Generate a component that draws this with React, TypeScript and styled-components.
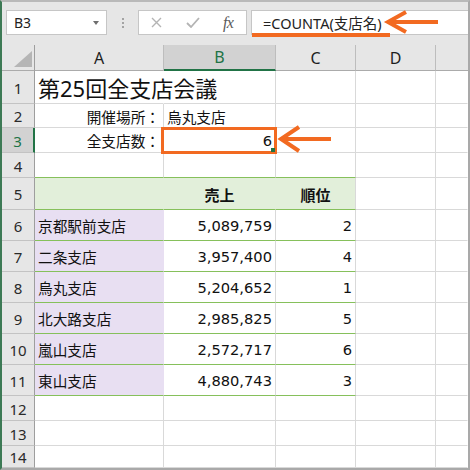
import React from 'react';
import styled, { createGlobalStyle } from 'styled-components';

const CELL_FONT = `"DejaVu Sans", "Noto Sans CJK JP", sans-serif`;
const UI_FONT = `"Noto Sans", "Noto Sans CJK JP", sans-serif`;
const ORANGE = '#f26a21';
const XL_GREEN = '#217346';
const TABLE_GREEN = '#86c05b';
const HEAD_FILL = '#e2efda';
const NAME_FILL = '#e8dff2';
const GRID = '#d9d9d9';

const GlobalStyle = createGlobalStyle`
  html, body {
    margin: 0;
    padding: 0;
    background: #ffffff;
  }
  * {
    box-sizing: border-box;
  }
`;

const Frame = styled.div`
  position: relative;
  width: 470px;
  height: 470px;
  overflow: hidden;
  background: #ffffff;
  border-top: 2px solid #b9b9b9;
  border-left: 2px solid #3d7a55;
  border-right: 2px solid #a9a9a9;
  border-bottom: 2px solid #a9a9a9;
  display: flex;
  flex-direction: column;
`;

/* ---------- formula bar ---------- */

const FormulaBar = styled.div`
  flex: none;
  height: 43px;
  background: #e6e6e6;
  display: flex;
  align-items: flex-start;
  padding: 8px 0 0 4px;
`;

const NameBox = styled.div`
  width: 101px;
  height: 25px;
  background: #ffffff;
  border: 1px solid #c6c6c6;
  display: flex;
  align-items: center;
  justify-content: space-between;
  padding: 0 7px 0 7px;
  font-family: ${UI_FONT};
  font-size: 14px;
  color: #222222;
`;

const DropArrow = styled.span`
  width: 0;
  height: 0;
  border-left: 3.5px solid transparent;
  border-right: 3.5px solid transparent;
  border-top: 4px solid #6e6e6e;
`;

const Grip = styled.div`
  width: 31px;
  height: 25px;
  display: flex;
  flex-direction: column;
  align-items: center;
  justify-content: center;
  gap: 2px;

  span {
    width: 2px;
    height: 2px;
    background: #a3a3a3;
  }
`;

const FxBox = styled.div`
  width: 109px;
  height: 25px;
  background: #ffffff;
  border: 1px solid #c6c6c6;
  display: flex;
`;

const FxSlot = styled.div`
  flex: 1;
  display: flex;
  align-items: center;
  justify-content: center;
`;

const FxLabel = styled.span`
  font-family: "Liberation Serif", serif;
  font-style: italic;
  font-size: 16px;
  color: #5a5a5a;
  letter-spacing: -0.5px;
`;

const FormulaInput = styled.div`
  flex: 1;
  height: 25px;
  margin-left: 4px;
  background: #ffffff;
  border: 1px solid #c6c6c6;
  border-right: none;
  display: flex;
  align-items: center;
  padding-left: 11px;
  font-family: ${UI_FONT};
  font-size: 14.5px;
  color: #222222;
  white-space: nowrap;
`;

/* ---------- sheet ---------- */

const Sheet = styled.div`
  flex: 1;
  display: grid;
  grid-template-columns: 33px 129px 112px 80px 80px 1fr;
  grid-template-rows: 26px 33px 24px 25px 25px 32px repeat(6, 31px) 25px 25px 1fr;
  font-family: ${CELL_FONT};
  color: #111111;
`;

const Corner = styled.div`
  background: #e6e6e6;
  border-right: 1px solid #9e9e9e;
  border-bottom: 1px solid #ababab;
  display: flex;
  align-items: flex-end;
  justify-content: flex-end;
  padding: 0 2px 3px 0;
`;

const ColHead = styled.div<{ $selected?: boolean; $last?: boolean }>`
  background: ${(p) => (p.$selected ? '#d2d2d2' : '#e6e6e6')};
  border-right: ${(p) => (p.$last ? 'none' : '1px solid #bdbdbd')};
  border-bottom: ${(p) => (p.$selected ? `2px solid ${XL_GREEN}` : '1px solid #ababab')};
  display: flex;
  align-items: center;
  justify-content: center;
  font-family: ${UI_FONT};
  font-size: 16px;
  color: ${(p) => (p.$selected ? XL_GREEN : '#1e1e1e')};
`;

const RowHead = styled.div<{ $selected?: boolean }>`
  background: ${(p) => (p.$selected ? '#d2d2d2' : '#e6e6e6')};
  border-right: ${(p) => (p.$selected ? `2px solid ${XL_GREEN}` : '1px solid #9e9e9e')};
  border-bottom: 1px solid #c3c3c3;
  display: flex;
  align-items: center;
  justify-content: center;
  padding-top: 1px;
  font-family: ${UI_FONT};
  font-size: 15px;
  color: ${(p) => (p.$selected ? XL_GREEN : '#2a2a2a')};
`;

type Align = 'left' | 'right' | 'center';

const justify: Record<Align, string> = {
  left: 'flex-start',
  right: 'flex-end',
  center: 'center',
};

const Cell = styled.div<{
  $align?: Align;
  $fill?: string;
  $line?: string;
  $rightLine?: string;
  $bold?: boolean;
  $size?: number;
  $font?: string;
}>`
  position: relative;
  min-width: 0;
  display: flex;
  align-items: center;
  justify-content: ${(p) => justify[p.$align || 'left']};
  padding: 1px 3px 0 3px;
  background: ${(p) => p.$fill || '#ffffff'};
  border-right: 1px solid ${(p) => p.$rightLine || GRID};
  border-bottom: 1px solid ${(p) => p.$line || GRID};
  font-family: ${(p) => p.$font || CELL_FONT};
  font-size: ${(p) => p.$size || 14.67}px;
  font-weight: ${(p) => (p.$bold ? 700 : 400)};
  white-space: nowrap;
`;

const Title = styled.span`
  position: relative;
  z-index: 1;
  margin-top: -2px;
`;

const Selection = styled.div`
  position: absolute;
  top: -1px;
  left: -3px;
  right: -2px;
  bottom: -2px;
  border: 3px solid ${ORANGE};
  z-index: 3;
`;

const FillHandle = styled.span`
  position: absolute;
  right: 0;
  bottom: 0;
  width: 4px;
  height: 4px;
  background: ${XL_GREEN};
  z-index: 4;
`;

/* ---------- annotations ---------- */

const Underline = styled.div`
  position: absolute;
  left: 250px;
  top: 31px;
  width: 138px;
  height: 4px;
  background: ${ORANGE};
`;

const Arrow = styled.svg<{ $x: number; $y: number }>`
  position: absolute;
  left: ${(p) => p.$x}px;
  top: ${(p) => p.$y}px;
  overflow: visible;
  z-index: 5;
`;

const LeftArrow: React.FC<{ x: number; y: number; len: number; head: number; half: number }> = ({
  x,
  y,
  len,
  head,
  half,
}) => (
  <Arrow $x={x} $y={y} width={len + 4} height={half * 2 + 4} viewBox={`0 0 ${len + 4} ${half * 2 + 4}`}>
    <g fill="none" stroke={ORANGE} strokeWidth={4} strokeLinejoin="miter" strokeMiterlimit={6}>
      <line x1={4} y1={half + 2} x2={len + 4} y2={half + 2} />
      <polyline points={`${4 + head},2 4,${half + 2} ${4 + head},${half * 2 + 2}`} />
    </g>
  </Arrow>
);

const branches: [string, string, string][] = [
  ['京都駅前支店', '5,089,759', '2'],
  ['二条支店', '3,957,400', '4'],
  ['烏丸支店', '5,204,652', '1'],
  ['北大路支店', '2,985,825', '5'],
  ['嵐山支店', '2,572,717', '6'],
  ['東山支店', '4,880,743', '3'],
];

const Spare: React.FC<{ line?: string }> = ({ line }) => (
  <>
    <Cell $line={line} />
    <Cell $line={line} $rightLine="transparent" />
  </>
);

const App: React.FC = () => {
  return (
    <>
      <GlobalStyle />
      <Frame>
        <FormulaBar>
          <NameBox>
            B3
            <DropArrow />
          </NameBox>
          <Grip>
            <span />
            <span />
            <span />
          </Grip>
          <FxBox>
            <FxSlot>
              <svg width="11" height="11" viewBox="0 0 11 11">
                <path d="M1 1 L10 10 M10 1 L1 10" stroke="#b4b4b4" strokeWidth="1.4" />
              </svg>
            </FxSlot>
            <FxSlot>
              <svg width="14" height="11" viewBox="0 0 14 11">
                <path d="M1 6 L5 10 L13 1" fill="none" stroke="#b4b4b4" strokeWidth="1.8" />
              </svg>
            </FxSlot>
            <FxSlot>
              <FxLabel>fx</FxLabel>
            </FxSlot>
          </FxBox>
          <FormulaInput>=COUNTA(支店名)</FormulaInput>
        </FormulaBar>

        <Sheet>
          <Corner>
            <svg width="18" height="16" viewBox="0 0 18 16">
              <polygon points="18,0 18,16 0,16" fill="#b5b5b5" />
            </svg>
          </Corner>
          <ColHead>A</ColHead>
          <ColHead $selected>B</ColHead>
          <ColHead>C</ColHead>
          <ColHead>D</ColHead>
          <ColHead $last />

          <RowHead>1</RowHead>
          <Cell $rightLine="#ffffff" $size={22} $font={UI_FONT}>
            <Title>第25回全支店会議</Title>
          </Cell>
          <Cell />
          <Cell />
          <Spare />

          <RowHead>2</RowHead>
          <Cell $align="right">開催場所：</Cell>
          <Cell>烏丸支店</Cell>
          <Cell />
          <Spare />

          <RowHead $selected>3</RowHead>
          <Cell $align="right">全支店数：</Cell>
          <Cell $align="right">
            6
            <Selection />
            <FillHandle />
          </Cell>
          <Cell />
          <Spare />

          <RowHead>4</RowHead>
          <Cell $line={TABLE_GREEN} />
          <Cell $line={TABLE_GREEN} />
          <Cell $line={TABLE_GREEN} />
          <Spare />

          <RowHead>5</RowHead>
          <Cell $fill={HEAD_FILL} $rightLine={HEAD_FILL} $line={TABLE_GREEN} />
          <Cell $fill={HEAD_FILL} $rightLine={HEAD_FILL} $line={TABLE_GREEN} $align="center" $bold $size={15}>
            売上
          </Cell>
          <Cell $fill={HEAD_FILL} $line={TABLE_GREEN} $align="center" $bold $size={15}>
            順位
          </Cell>
          <Spare />

          {branches.map(([name, sales, rank], i) => (
            <React.Fragment key={name}>
              <RowHead>{i + 6}</RowHead>
              <Cell $fill={NAME_FILL} $rightLine={NAME_FILL} $line={TABLE_GREEN}>
                {name}
              </Cell>
              <Cell $align="right" $line={TABLE_GREEN}>
                {sales}
              </Cell>
              <Cell $align="right" $line={TABLE_GREEN}>
                {rank}
              </Cell>
              <Spare />
            </React.Fragment>
          ))}

          {[12, 13, 14].map((n) => (
            <React.Fragment key={n}>
              <RowHead>{n}</RowHead>
              <Cell />
              <Cell />
              <Cell />
              <Spare />
            </React.Fragment>
          ))}
        </Sheet>

        <Underline />
        <LeftArrow x={382} y={8} len={50} head={18} half={10} />
        <LeftArrow x={275} y={123} len={50} head={18} half={12} />
      </Frame>
    </>
  );
};

export default App;
